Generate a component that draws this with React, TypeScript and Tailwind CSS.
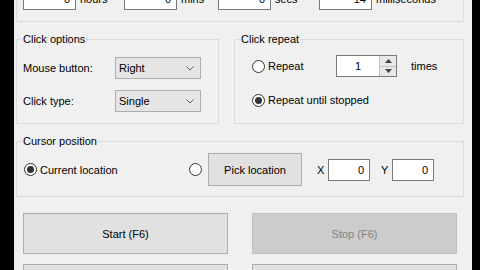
import React from "react";

function Radio({ checked }: { checked?: boolean }) {
  return (
    <span className="w-[13px] h-[13px] shrink-0 rounded-full border border-[#333333] bg-white flex items-center justify-center">
      {checked ? <span className="w-[7px] h-[7px] rounded-full bg-[#333333]" /> : null}
    </span>
  );
}

function Combo({ value }: { value: string }) {
  return (
    <div className="w-[86px] h-[22px] border border-[#adadad] bg-[#e5e5e5] flex items-center pl-[3px] pr-[6px]">
      <span className="flex-1">{value}</span>
      <svg width="8" height="5" viewBox="0 0 8 5">
        <path d="M0.5 0.5 L4 4 L7.5 0.5" fill="none" stroke="#606060" strokeWidth="1" />
      </svg>
    </div>
  );
}

function TextBox({ value, w }: { value: string; w: string }) {
  return (
    <div className={`${w} h-[22px] border border-[#7a7a7a] bg-white flex items-center justify-end pr-[5px]`}>
      {value}
    </div>
  );
}

function Unit({ value, label, w, color }: { value: string; label: string; w: string; color?: string }) {
  return (
    <div className={`${w} flex items-center shrink-0`}>
      <div className="w-[53px] h-[22px] border border-[#7a7a7a] bg-white flex items-center justify-end pr-[5px]">
        <span className={color}>{value}</span>
      </div>
      <span className="ml-[4px]">{label}</span>
    </div>
  );
}

export default function App() {
  return (
    <div className="w-[480px] h-[270px] bg-black flex overflow-hidden font-['Liberation_Sans',Arial,sans-serif] text-[11px] leading-[14px] text-black">
      <div className="w-[14px] shrink-0" />
      <div className="w-[458px] shrink-0 bg-[#f0f0f0] flex flex-col pl-[2px] pr-[8px]">
        {/* top group (partially visible) */}
        <div className="h-[22px] shrink-0 border-x border-b border-[#dcdcdc]">
          <div className="-mt-[12px] pl-[6px] flex items-center">
            <Unit value="0" label="hours" w="w-[101px]" />
            <Unit value="0" label="mins" w="w-[94px]" />
            <Unit value="0" label="secs" w="w-[101px]" />
            <Unit value="14" label="milliseconds" w="w-[140px]" />
          </div>
        </div>

        <div className="mt-[10px] flex gap-[15px]">
          <fieldset className="w-[203px] border border-[#dcdcdc] m-0 p-0 min-w-0">
            <legend className="ml-[5px] px-[1px] leading-[14px]">Click options</legend>
            <div className="pt-[11px] pl-[6px] pb-[11px] flex flex-col gap-[11px]">
              <div className="flex items-center">
                <span className="w-[92px]">Mouse button:</span>
                <Combo value="Right" />
              </div>
              <div className="flex items-center">
                <span className="w-[92px]">Click type:</span>
                <Combo value="Single" />
              </div>
            </div>
          </fieldset>

          <fieldset className="w-[230px] border border-[#dcdcdc] m-0 p-0 min-w-0">
            <legend className="ml-[5px] px-[1px] leading-[14px]">Click repeat</legend>
            <div className="pt-[9px] pl-[17px] flex flex-col gap-[12px]">
              <div className="flex items-center h-[22px]">
                <div className="w-[84px] flex items-center">
                  <Radio />
                  <span className="ml-[3px]">Repeat</span>
                </div>
                <div className="w-[61px] h-[22px] border border-[#7a7a7a] bg-white flex">
                  <span className="flex-1 flex items-center justify-center">1</span>
                  <div className="w-[17px] flex flex-col border-l border-[#c0c0c0]">
                    <div className="flex-1 bg-[#e8e8e8] border-b border-[#c0c0c0] flex items-center justify-center">
                      <svg width="7" height="4" viewBox="0 0 7 4"><path d="M3.5 0 L7 4 L0 4 Z" fill="#404040" /></svg>
                    </div>
                    <div className="flex-1 bg-[#e8e8e8] flex items-center justify-center">
                      <svg width="7" height="4" viewBox="0 0 7 4"><path d="M0 0 L7 0 L3.5 4 Z" fill="#404040" /></svg>
                    </div>
                  </div>
                </div>
                <span className="ml-[14px]">times</span>
              </div>
              <div className="flex items-center h-[22px]">
                <Radio checked />
                <span className="ml-[3px]">Repeat until stopped</span>
              </div>
            </div>
          </fieldset>
        </div>

        <fieldset className="mt-[10px] w-[448px] border border-[#dcdcdc] m-0 p-0 min-w-0">
          <legend className="ml-[5px] px-[1px] leading-[14px]">Cursor position</legend>
          <div className="pt-[5px] pb-[10px] pl-[7px] flex items-center">
            <div className="w-[165px] flex items-center">
              <Radio checked />
              <span className="ml-[3px]">Current location</span>
            </div>
            <Radio />
            <div className="ml-[6px] w-[94px] h-[33px] border border-[#adadad] bg-[#e1e1e1] flex items-center justify-center">
              Pick location
            </div>
            <span className="ml-[15px] w-[11px]">X</span>
            <TextBox value="0" w="w-[42px]" />
            <span className="ml-[11px] w-[11px]">Y</span>
            <TextBox value="0" w="w-[42px]" />
          </div>
        </fieldset>

        <div className="mt-[16px] pl-[7px] flex gap-[24px]">
          <div className="w-[205px] h-[41px] border border-[#adadad] bg-[#e1e1e1] flex items-center justify-center">
            Start (F6)
          </div>
          <div className="w-[205px] h-[41px] border border-[#bfbfbf] bg-[#cccccc] text-[#838383] flex items-center justify-center">
            Stop (F6)
          </div>
        </div>
        <div className="mt-[10px] pl-[7px] flex gap-[24px]">
          <div className="w-[205px] h-[41px] shrink-0 border border-[#adadad] bg-[#e1e1e1]" />
          <div className="w-[205px] h-[41px] shrink-0 border border-[#adadad] bg-[#e1e1e1]" />
        </div>
      </div>
      <div className="flex-1" />
    </div>
  );
}
